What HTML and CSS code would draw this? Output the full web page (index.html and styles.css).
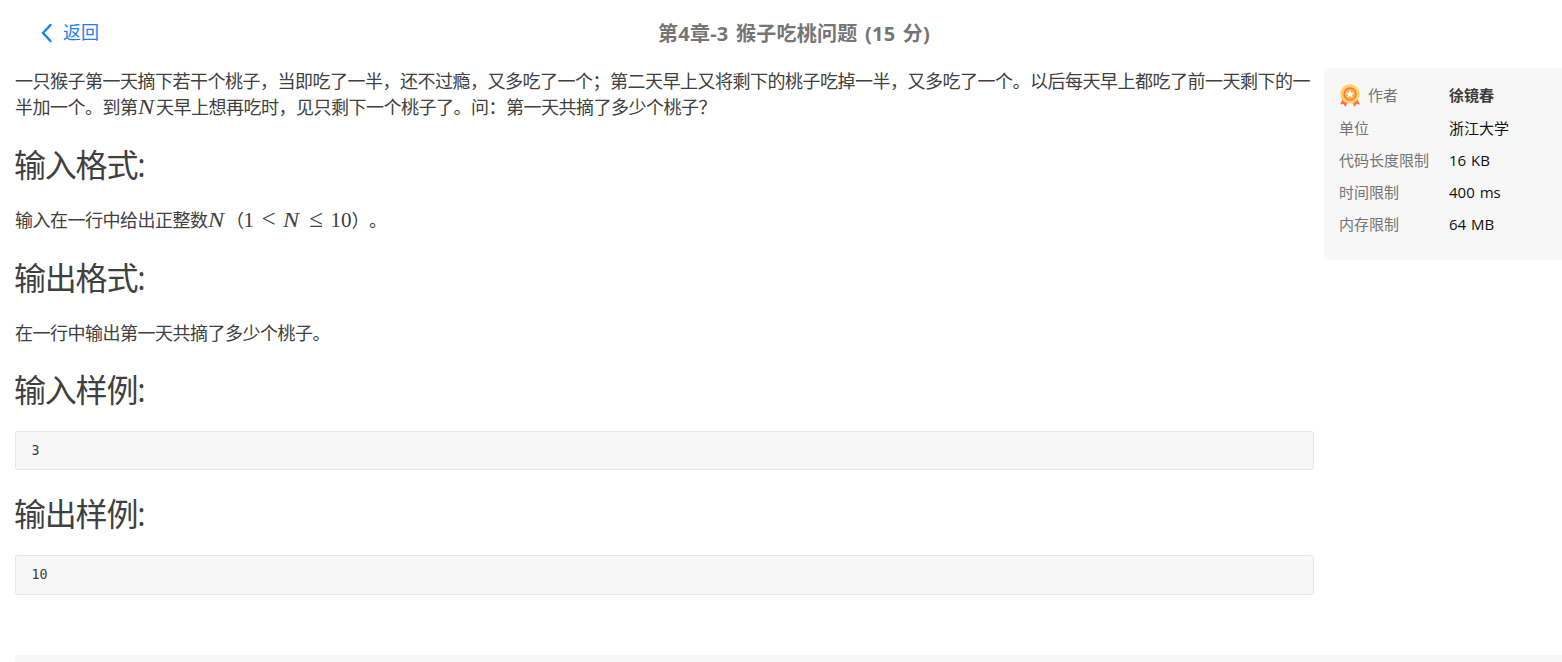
FILE: index.html
```html
<!DOCTYPE html>
<html lang="zh-CN">
<head>
    <meta charset="UTF-8">
    <meta name="viewport" content="width=device-width, initial-scale=1.0">
    <title>第4章-3 猴子吃桃问题</title>
    <link rel="stylesheet" href="styles.css">
</head>
<body>

<header class="header">
    <a class="back">
        <svg class="back-icon" width="12" height="20" viewBox="0 0 12 20"><path d="M9.500 2 L2 10 L9.500 18" fill="none" stroke="#1a7ff0" stroke-width="2.500" stroke-linecap="round" stroke-linejoin="round"/></svg>
        <span>返回</span>
    </a>
    <h1 class="title">第4章-3 猴子吃桃问题 (15 分)</h1>
</header>

<div class="main">
    <div class="content">
        <p class="intro">一只猴子第一天摘下若干个桃子，当即吃了一半，还不过瘾，又多吃了一个；第二天早上又将剩下的桃子吃掉一半，又多吃了一个。以后每天早上都吃了前一天剩下的一半加一个。到第<span class="math"><i class="var">N</i></span>天早上想再吃时，见只剩下一个桃子了。问：第一天共摘了多少个桃子？</p>
        <h3>输入格式:</h3>
        <p class="formula">输入在一行中给出正整数<span class="math"><i class="var">N</i></span>（<span class="math"><span>1</span><span class="rel">&lt;</span><i class="var">N</i><span class="rel">≤</span><span>10</span></span>）。</p>
        <h3>输出格式:</h3>
        <p>在一行中输出第一天共摘了多少个桃子。</p>
        <h3>输入样例:</h3>
        <pre>3</pre>
        <h3>输出样例:</h3>
        <pre>10</pre>
    </div>

    <aside class="info">
        <div class="row author">
            <span class="label">
                <svg class="medal" width="22" height="24" viewBox="0 0 22 24">
                    <path d="M4 14 L1 20.5 L4.500 20 L6.500 23 L10 16 Z M18 14 L21 20.500 L17.500 20 L15.500 23 L12 16 Z" fill="#ff7058"/>
                    <circle cx="11" cy="10" r="8.600" fill="#ffd15c"/>
                    <circle cx="11" cy="10" r="8.700" fill="none" stroke="#ffd15c" stroke-width="2" stroke-dasharray="2.700 1.855" stroke-linecap="round"/>
                    <circle cx="11" cy="10" r="6" fill="#f8b64c" stroke="#ff7058" stroke-width="1.400"/>
                    <path d="M11 6 L12.100 8.700 L15 8.900 L12.800 10.700 L13.500 13.500 L11 12 L8.500 13.500 L9.200 10.700 L7 8.900 L9.900 8.700 Z" fill="#fff"/>
                </svg>
                作者
            </span>
            <b class="value cn">徐镜春</b>
        </div>
        <div class="row"><span class="label">单位</span><span class="value cn">浙江大学</span></div>
        <div class="row"><span class="label">代码长度限制</span><span class="value">16 KB</span></div>
        <div class="row"><span class="label">时间限制</span><span class="value">400 ms</span></div>
        <div class="row"><span class="label">内存限制</span><span class="value">64 MB</span></div>
    </aside>
</div>

<div class="editor"></div>

</body>
</html>
```

FILE: styles.css
```css
* {
    box-sizing: border-box;
}
body {
    margin: 0;
    height: 662px;
    overflow: hidden;
    background-color: #fff;
    color: #404040;
    font-family: "Open Sans", "Noto Sans CJK SC", sans-serif;
    text-spacing-trim: space-all;
}
.header {
    display: grid;
    grid-template-columns: 641px 1fr;
    align-items: center;
    height: 68px;
    padding-left: 17px;
}
.back {
    display: flex;
    align-items: center;
    height: 28px;
    margin-bottom: 4px;
    padding-left: 24px;
    color: #1a7ff0;
    font-size: 18px;
    line-height: 28px;
}
.back-icon {
    margin: 2px 10px 0 0;
}
.title {
    margin: 0;
    color: #757575;
    font-size: 20px;
    line-height: 28px;
    font-weight: bold;
    letter-spacing: 0.25px;
    word-spacing: 2px;
}
.main {
    display: flex;
    align-items: flex-start;
    height: 587px;
}
.content {
    width: 1299px;
    margin-left: 15px;
    font-size: 18px;
    letter-spacing: -0.5px;
}
.content p {
    margin: 0;
    padding-top: 1px;
    line-height: 26px;
}
.content .intro {
    padding: 0 0 1px;
}
.content .formula {
    padding: 0;
    line-height: 28px;
}
.content h3 {
    margin: 23px 0 21px -1px;
    font-size: 32px;
    font-weight: normal;
    line-height: 41px;
    letter-spacing: -1.2px;
}
.content pre {
    height: 39.4px;
    margin: 0;
    padding: 0 15.5px;
    border: 1px solid #e6e6e6;
    border-radius: 3px;
    background-color: #f7f7f7;
    font-family: "DejaVu Sans Mono", monospace;
    font-size: 13.3px;
    line-height: 37.5px;
    letter-spacing: 0;
}
/* formulas */
.math {
    font-family: "Liberation Serif", serif;
    font-size: 21px;
    line-height: 1;
    letter-spacing: 0;
}
.var {
    display: inline-block;
    width: 18.5px;
    transform: scaleX(1.15);
    transform-origin: left;
}
.rel {
    display: inline-block;
    width: 29px;
    font-size: 25px;
    line-height: 20px;
    text-align: center;
}
/* problem limits */
.info {
    width: 238px;
    height: 192px;
    margin-left: 10px;
    padding: 11px 15px;
    border-radius: 4px 0 0 4px;
    background-color: #f7f7f7;
    font-size: 15px;
}
.row {
    display: flex;
    align-items: center;
    height: 32px;
}
.author {
    height: 33px;
}
.label {
    display: flex;
    align-items: center;
    width: 110px;
    padding-bottom: 2px;
    color: #757575;
}
.medal {
    margin: 2px 7px 0 0;
}
.value {
    color: #111;
    word-spacing: 1px;
}
.cn {
    padding-bottom: 2px;
}
b.value {
    color: #3c3c3c;
}
.editor {
    height: 7px;
    margin-left: 15px;
    background-color: #f7f7f7;
}
```
